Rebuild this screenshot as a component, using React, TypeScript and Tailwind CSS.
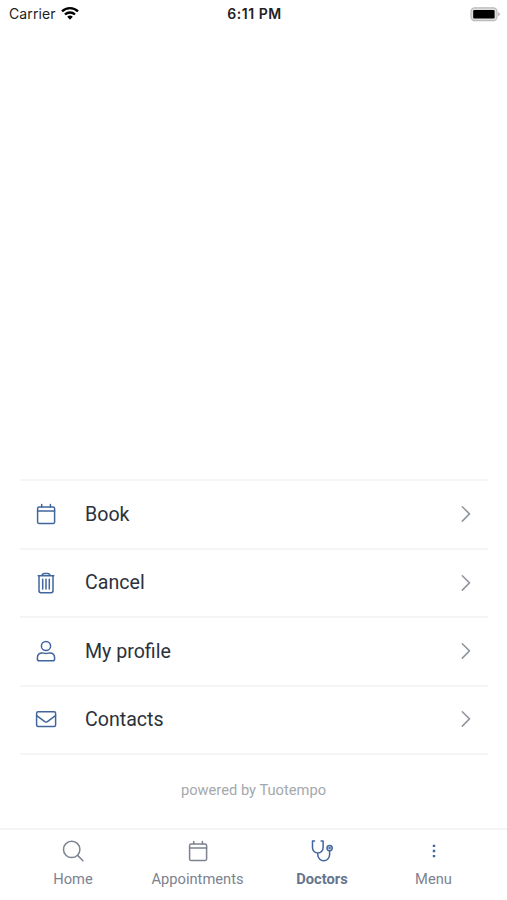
import type { ReactNode } from "react";

function Icon({ children, className = "" }: { children: ReactNode; className?: string }) {
  return (
    <svg
      viewBox="0 0 24 24"
      className={`size-6 shrink-0 ${className}`}
      fill="none"
      stroke="currentColor"
      strokeWidth={1.5}
      strokeLinecap="round"
      strokeLinejoin="round"
    >
      {children}
    </svg>
  );
}

function CalendarIcon() {
  return (
    <Icon>
      <rect x="3.6" y="4.9" width="17" height="16.7" rx="1.6" />
      <path d="M3.6 9.1h17M7.7 2.6v2.3M16.4 2.6v2.3" />
    </Icon>
  );
}

function TrashIcon() {
  return (
    <Icon>
      <path d="M4.2 4.8h15.6M8 4.6q.3-2.2 2.2-2.2h3.6q1.9 0 2.2 2.2M5 4.8v15q0 1.900 1.900 1.900h10.200q1.900 0 1.900-1.900v-15M8.700 8.300v9.800M12 8.300v9.800M15.300 8.300v9.800" />
    </Icon>
  );
}

function UserIcon() {
  return (
    <Icon>
      <circle cx="12" cy="7" r="4.6" />
      <path d="M8.3 13.9c1.4 0 2 .5 3.7.5s2.3-.5 3.7-.5c2.9 0 4.9 2 4.9 4.8v1.200q0 1.800-1.800 1.800H5.200q-1.800 0-1.800-1.800v-1.200c0-2.800 2-4.800 4.900-4.800z" />
    </Icon>
  );
}

function MailIcon() {
  return (
    <Icon>
      <rect x="2.6" y="4.8" width="19" height="14.6" rx="1.5" />
      <path d="M2.7 8.600l8.100 6q1.300.9 2.600 0l8.100-6" />
    </Icon>
  );
}

function SearchIcon() {
  return (
    <Icon>
      <circle cx="10.7" cy="10.4" r="8.2" />
      <path d="M16.6 16.4l5.3 5.3" />
    </Icon>
  );
}

function StethoscopeIcon() {
  return (
    <Icon className="text-[#41659d]">
      <path d="M4.5 2.1H2.5v6.600a5.300 5.300 0 0 0 10.600 0V2.100h-2M7.800 14.100v1.700a5.900 5.900 0 0 0 11.800 0v-4" />
      <circle cx="19.6" cy="9.1" r="2.6" />
      <circle cx="19.6" cy="9.1" r=".5" />
    </Icon>
  );
}

function DotsIcon() {
  return (
    <Icon className="text-[#41659d]">
      <path d="M10.8 5.700h2.400v2.400h-2.400zM10.800 10.800h2.400v2.400h-2.400zM10.800 15.900h2.400v2.400h-2.400z" fill="currentColor" stroke="none" />
    </Icon>
  );
}

function StatusBar() {
  return (
    <header className="grid h-7 grid-cols-3 items-center pr-[7px] pl-[9px] font-['Inter','Liberation_Sans',sans-serif] text-[14px] text-[#222]">
      <div className="flex items-center gap-[4px] pb-[2px]">
        <span className="w-12 tracking-[0.1px]">Carrier</span>
        <svg viewBox="0 0 18 14" className="h-[14px] w-[18px]" fill="none" stroke="#000" strokeWidth="2.400">
          <path d="M1 5.400a11.400 11.400 0 0 1 16 0M4 8.500a7.100 7.100 0 0 1 10 0" />
          <path d="M6.200 10.800a4 4 0 0 1 5.600 0L9 13.700z" fill="#000" stroke="none" />
        </svg>
      </div>
      <span className="pb-px text-center text-[14px] font-semibold tracking-[0.55px] whitespace-nowrap">6:11 PM</span>
      <svg viewBox="0 0 30 16" className="mb-px h-4 w-[30px] justify-self-end">
        <rect x="1" y="1.800" width="26" height="12.800" rx="3.600" fill="#ddd" stroke="#bbb" strokeWidth="1.200" />
        <rect x="3.200" y="4" width="21.400" height="8.400" rx="1.200" fill="#000" />
        <path d="M28.200 6.100q3 2.100 0 4.200z" fill="#aaa" />
      </svg>
    </header>
  );
}

const actions = [
  { label: "Book", icon: <CalendarIcon /> },
  { label: "Cancel", icon: <TrashIcon /> },
  { label: "My profile", icon: <UserIcon /> },
  { label: "Contacts", icon: <MailIcon /> },
];

const tabs = [
  { label: "Home", icon: <SearchIcon />, style: "w-[124px] text-[#7c8290]" },
  { label: "Appointments", icon: <CalendarIcon />, style: "w-[125px] text-[#7c8290]" },
  { label: "Doctors", icon: <StethoscopeIcon />, style: "w-[124px] font-bold text-[#65758e]" },
  { label: "Menu", icon: <DotsIcon />, style: "w-[99px] text-[#7c8290]" },
];

export default function App() {
  return (
    <div className="flex h-[900px] w-full flex-col overflow-hidden bg-white font-['Roboto','Liberation_Sans',sans-serif]">
      <StatusBar />
      <main className="flex flex-1 flex-col justify-end">
        <ul className="mr-[19px] ml-5 border-t-2 border-[#f4f5f6]">
          {actions.map(({ label, icon }) => (
            <li key={label} className="flex h-[68.4px] items-center border-b-2 border-[#f4f5f6] pr-[10px] pb-px pl-[14px] text-[#41659d]">
              {icon}
              <span className="ml-[27px] flex-1 pt-px text-[19.6px] text-[#2b323b]">{label}</span>
              <Icon className="text-[#90949c]">
                <path d="M8.300 4.700l7.200 7.200-7.200 7.200" />
              </Icon>
            </li>
          ))}
        </ul>
        <p className="flex h-[73px] items-center justify-center pb-[2px] text-[14.7px] text-[#a5a8ab]">powered by Tuotempo</p>
      </main>
      <nav className="flex h-[72px] border-t-2 border-[#f4f4f5] pt-[9px] pl-[11px]">
        {tabs.map(({ label, icon, style }) => (
          <div key={label} className={`flex flex-col items-center gap-[6px] text-[14.7px] leading-5 ${style}`}>
            {icon}
            <span>{label}</span>
          </div>
        ))}
      </nav>
    </div>
  );
}
